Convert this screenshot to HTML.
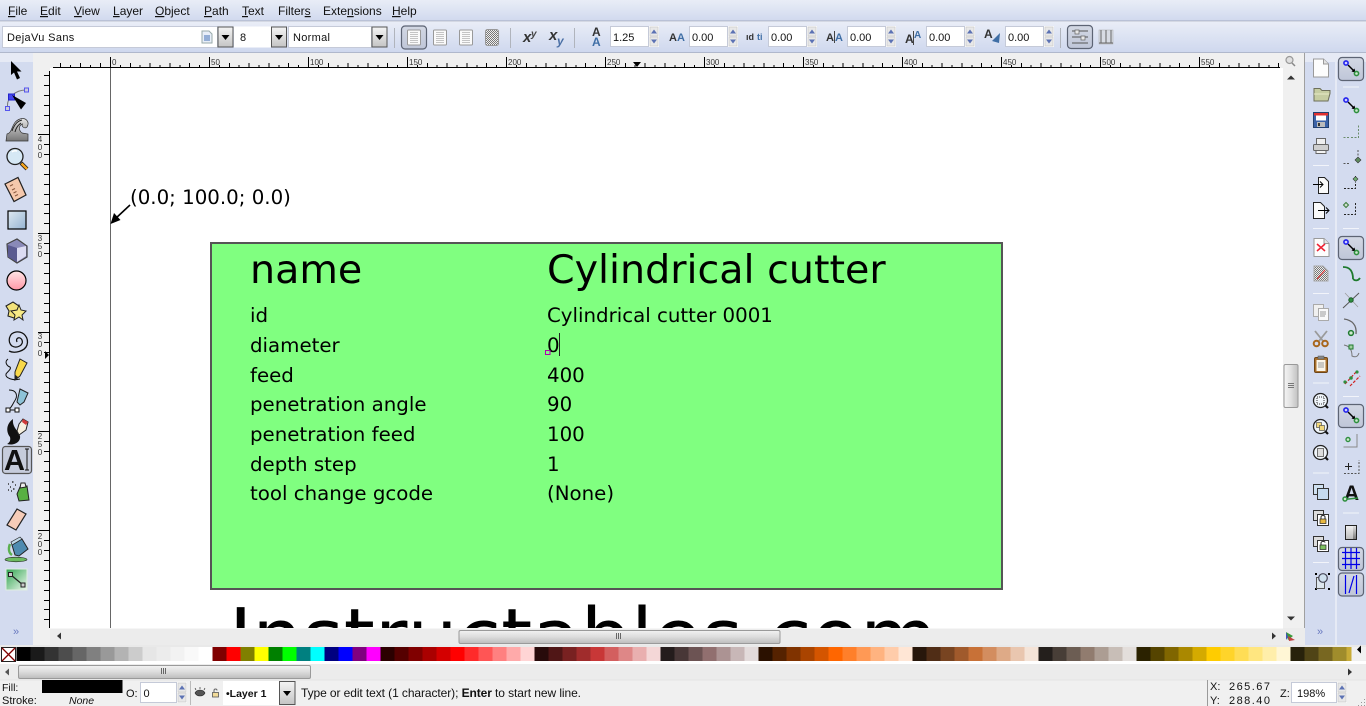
<!DOCTYPE html>
<html><head><meta charset="utf-8"><title>Inkscape</title>
<style>
html,body{margin:0;padding:0;width:1366px;height:706px;overflow:hidden;background:#f0f0f0}
svg{display:block;position:absolute;left:0;top:0}
text{font-family:"Liberation Sans",sans-serif;font-size:12px;fill:#111}
.c text,text.c{font-family:"DejaVu Sans","Liberation Sans",sans-serif;fill:#000}
.r text{font-size:8px;fill:#333}
.u{text-decoration:underline}
</style></head><body>
<svg width="1366" height="706" viewBox="0 0 1366 706" xmlns="http://www.w3.org/2000/svg">
<defs>
<linearGradient id="mb" x1="0" y1="0" x2="0" y2="1"><stop offset="0" stop-color="#e9edf7"/><stop offset="1" stop-color="#d0d9ee"/></linearGradient>
<linearGradient id="tb" x1="0" y1="0" x2="0" y2="1"><stop offset="0" stop-color="#e9edf7"/><stop offset="1" stop-color="#cfd8ee"/></linearGradient>
<linearGradient id="btn" x1="0" y1="0" x2="0" y2="1"><stop offset="0" stop-color="#f4f4f4"/><stop offset="1" stop-color="#c4c4c4"/></linearGradient>
<linearGradient id="th" x1="0" y1="0" x2="0" y2="1"><stop offset="0" stop-color="#f2f2f2"/><stop offset=".5" stop-color="#dcdcdc"/><stop offset="1" stop-color="#bcbcbc"/></linearGradient>
<linearGradient id="thv" x1="0" y1="0" x2="1" y2="0"><stop offset="0" stop-color="#f4f4f4"/><stop offset=".5" stop-color="#e0e0e0"/><stop offset="1" stop-color="#c0c0c0"/></linearGradient>
<linearGradient id="gr" x1="0" y1="0" x2="0" y2="1"><stop offset="0" stop-color="#e4e4e4"/><stop offset="1" stop-color="#777"/></linearGradient>
<linearGradient id="rb" x1="0" y1="0" x2="1" y2="1"><stop offset="0" stop-color="#dfe9f2"/><stop offset="1" stop-color="#95b4d2"/></linearGradient>
<linearGradient id="pk" x1="0" y1="0" x2="0" y2="1"><stop offset="0" stop-color="#ffe6e6"/><stop offset="1" stop-color="#ff97a6"/></linearGradient>
<linearGradient id="gg" x1="0" y1="0" x2="1" y2="1"><stop offset="0" stop-color="#2fa34f"/><stop offset="1" stop-color="#eef8ee"/></linearGradient>
<linearGradient id="act" x1="0" y1="0" x2="0" y2="1"><stop offset="0" stop-color="#d3d8e4"/><stop offset="1" stop-color="#bfc6d8"/></linearGradient>
<pattern id="ck" width="2" height="2" patternUnits="userSpaceOnUse"><rect width="2" height="2" fill="#eee"/><rect width="1" height="1" fill="#777"/><rect x="1" y="1" width="1" height="1" fill="#777"/></pattern>
<g id="sp"><rect x="0" y="0" width="10" height="21" fill="#fbfbfb"/><rect x="1" y="1" width="8" height="9" fill="#e8e8e8" stroke="#c4c4c4" stroke-width=".6"/><rect x="1" y="11" width="8" height="9" fill="#e8e8e8" stroke="#c4c4c4" stroke-width=".6"/><path d="M5 3.5 8 7.5H2zM5 17.5 2 13.5H8z" fill="#5c72b4"/></g>
<g id="ar"><rect x=".5" y=".5" width="15" height="20" fill="url(#btn)" stroke="#555"/><path d="M4 8.5h8l-4 5z" fill="#000"/></g>
<g id="tk" shape-rendering="crispEdges" stroke="#000" fill="none"><path d="M0 4v10M9.9 12v2M19.8 10v4M29.7 12v2M39.6 10v4M49.5 12v2M59.4 10v4M69.3 12v2M79.2 10v4M89.1 12v2"/></g>
<g id="sn"><path d="M-3 -3 3.5 3.5" stroke="#000" stroke-width="1.4"/><path d="M4.5 4.5 .5 3.5 3.5 .5z" fill="#000"/><circle cx="-5" cy="-5" r="2.1" fill="#cfd0ff" stroke="#2222ee" stroke-width="1.6"/><circle cx="5.5" cy="5.5" r="2.1" fill="#cfe8cf" stroke="#2f8f3f" stroke-width="1.6"/></g>
<g id="doc"><path d="M-7 -9H3L8 -4V9H-7Z" fill="#fdfdfd" stroke="#9a9a9a"/><path d="M3 -9V-4H8" fill="#e4e4e4" stroke="#9a9a9a"/></g>
<g id="act1"><rect x="-12.5" y="-11.5" width="25" height="23" rx="3.5" fill="url(#act)" stroke="#5d6474" stroke-width="1.2"/></g>
<g id="tdoc"><rect x="-6.5" y="-7.5" width="13" height="15" rx="1" fill="#fafafa" stroke="#999"/><path d="M-4 -5h8M-4 -3h8M-4 -1h8M-4 1h8M-4 3h8M-4 5h8" stroke="#c4c4c4"/></g>
<clipPath id="cv"><rect x="50" y="68" width="1233" height="560"/></clipPath>
</defs>

<!-- base -->
<rect width="1366" height="706" fill="#f0f0f0"/>
<rect width="1366" height="21" fill="url(#mb)"/>
<rect y="20" width="1366" height="1.5" fill="#b9c1d6"/>
<rect y="22" width="1366" height="30" fill="url(#tb)"/>
<rect y="52" width="1366" height="1" fill="#b0b8cc"/>

<!-- menu -->
<text x="8" y="15"><tspan class="u">F</tspan>ile</text>
<text x="40" y="15"><tspan class="u">E</tspan>dit</text>
<text x="74" y="15"><tspan class="u">V</tspan>iew</text>
<text x="113" y="15"><tspan class="u">L</tspan>ayer</text>
<text x="155" y="15"><tspan class="u">O</tspan>bject</text>
<text x="204" y="15"><tspan class="u">P</tspan>ath</text>
<text x="242" y="15"><tspan class="u">T</tspan>ext</text>
<text x="278" y="15">Filter<tspan class="u">s</tspan></text>
<text x="323" y="15">Exte<tspan class="u">n</tspan>sions</text>
<text x="392" y="15"><tspan class="u">H</tspan>elp</text>

<!-- text toolbar -->
<rect x="2.5" y="26.5" width="215" height="21" fill="#fff" stroke="#c5cad8"/>
<text x="7" y="41" style="font-size:11px;letter-spacing:.35px">DejaVu Sans</text>
<path d="M202 31h7l3 3v9h-10z" fill="#e8eef8" stroke="#9aa"/><path d="M204 36h6M204 38h6M204 40h6" stroke="#3f6fb5" stroke-width="1"/>
<use href="#ar" x="217.5" y="26.5"/>
<rect x="234" y="26.5" width="37" height="21" fill="#fff"/><text x="240" y="41" style="font-size:11px">8</text>
<use href="#ar" x="271" y="26.5"/>
<rect x="288.5" y="26.5" width="83" height="21" fill="#fff" stroke="#c5cad8"/><text x="293" y="41" style="font-size:11px;letter-spacing:.3px">Normal</text>
<use href="#ar" x="371.5" y="26.5"/>
<path d="M394.5 28v20" stroke="#b0b4bc"/>

<use href="#act1" x="414" y="37.5"/>
<use href="#tdoc" x="414" y="37.5"/><use href="#tdoc" x="440" y="37.5"/><use href="#tdoc" x="466" y="37.5"/>
<rect x="485.5" y="29.5" width="13" height="16" rx="2" fill="url(#ck)" stroke="#999"/>
<path d="M510.5 28v20M574.5 28v20" stroke="#b0b4bc"/>
<text x="523" y="42" style="font-size:15px;font-weight:bold;font-style:italic;fill:#333">x</text><text x="531" y="37" style="font-size:10px;font-weight:bold;font-style:italic;fill:#444">y</text>
<text x="549" y="40" style="font-size:15px;font-weight:bold;font-style:italic;fill:#333">x</text><text x="557" y="45" style="font-size:12px;font-weight:bold;font-style:italic;fill:#4a6fa5">y</text>

<text x="592" y="36" style="font-size:12px;font-weight:bold;fill:#333">A</text><text x="592" y="46" style="font-size:12px;font-weight:bold;fill:#3f6ea5">A</text>
<rect x="610.5" y="26.5" width="38" height="20" fill="#fff" stroke="#c5cad8"/><text x="613" y="41" style="font-size:11px">1.25</text><use href="#sp" x="649" y="26"/>
<text x="669" y="41" style="font-size:11px;font-weight:bold;fill:#333">A</text><text x="677" y="41" style="font-size:11px;font-weight:bold;fill:#3f6ea5">A</text>
<rect x="689.5" y="26.5" width="38" height="20" fill="#fff" stroke="#c5cad8"/><text x="692" y="41" style="font-size:11px">0.00</text><use href="#sp" x="728" y="26"/>
<text x="746" y="40" style="font-size:9px;font-weight:bold;fill:#333">ıd</text><text x="757" y="40" style="font-size:9px;font-weight:bold;fill:#3f6ea5">ti</text>
<rect x="768.5" y="26.5" width="38" height="20" fill="#fff" stroke="#c5cad8"/><text x="771" y="41" style="font-size:11px">0.00</text><use href="#sp" x="807" y="26"/>
<text x="826" y="41" style="font-size:11px;font-weight:bold;fill:#333">A</text><text x="835" y="41" style="font-size:11px;font-weight:bold;fill:#3f6ea5">A</text><path d="M834.5 31v12" stroke="#444"/>
<rect x="847.5" y="26.5" width="38" height="20" fill="#fff" stroke="#c5cad8"/><text x="850" y="41" style="font-size:11px">0.00</text><use href="#sp" x="886" y="26"/>
<text x="905" y="43" style="font-size:12px;font-weight:bold;fill:#333">A</text><text x="914" y="38" style="font-size:10px;font-weight:bold;fill:#3f6ea5">A</text><path d="M913.5 31v14" stroke="#444"/>
<rect x="926.5" y="26.5" width="38" height="20" fill="#fff" stroke="#c5cad8"/><text x="929" y="41" style="font-size:11px">0.00</text><use href="#sp" x="965" y="26"/>
<text x="984" y="38" style="font-size:12px;font-weight:bold;fill:#333">A</text><path d="M1000 33 992 41 999 43z" fill="#3f6ea5"/>
<rect x="1005.5" y="26.5" width="38" height="20" fill="#fff" stroke="#c5cad8"/><text x="1008" y="41" style="font-size:11px">0.00</text><use href="#sp" x="1044" y="26"/>
<path d="M1060.5 28v20" stroke="#b0b4bc"/>
<use href="#act1" x="1080" y="37"/>
<path d="M1072 31h16M1072 37h16M1072 43h16" stroke="#555" fill="none"/><path d="M1075 30h4v4h-4zM1081 36h4v4h-4z" fill="#e8e8e8" stroke="#666" stroke-width=".7"/>
<rect x="1099" y="30" width="14" height="14" fill="#d8dce4" stroke="#aaa" stroke-width=".5"/><path d="M1101 30v13M1106 30v13M1111 30v13M1099 43h14" stroke="#666" fill="none"/>

<!-- left toolbar -->
<rect x="0" y="53" width="33" height="592" fill="#d3dbef"/>
<rect x="0" y="53" width="33" height="9" fill="#e6eaf5"/>

<!-- rulers -->
<rect x="33" y="53" width="1250" height="15" fill="#f0f0f0"/>
<rect x="33" y="68" width="17" height="577" fill="#f0f0f0"/>
<path d="M53 67.5H1280" stroke="#000" shape-rendering="crispEdges"/>
<path d="M49.5 71V628" stroke="#000" shape-rendering="crispEdges"/>
<g transform="translate(0 53)">
<use href="#tk" x="110.5"/><use href="#tk" x="209.5"/><use href="#tk" x="308.5"/><use href="#tk" x="407.5"/><use href="#tk" x="506.5"/><use href="#tk" x="605.5"/><use href="#tk" x="704.5"/><use href="#tk" x="803.5"/><use href="#tk" x="902.5"/><use href="#tk" x="1001.5"/><use href="#tk" x="1100.5"/><use href="#tk" x="1199.5"/>
<path d="M60.5 10v4M70.5 12v2M80.5 10v4M90.5 12v2M100.5 10v4" stroke="#000" shape-rendering="crispEdges"/>
</g>
<g class="r">
<text x="112" y="65">0</text><text x="211" y="65">50</text><text x="310" y="65">100</text><text x="409" y="65">150</text><text x="508" y="65">200</text><text x="607" y="65">250</text><text x="706" y="65">300</text><text x="805" y="65">350</text><text x="904" y="65">400</text><text x="1003" y="65">450</text><text x="1102" y="65">500</text><text x="1201" y="65">550</text>
</g>
<path d="M633 62h8l-4 5z" fill="#000"/>
<path shape-rendering="crispEdges" stroke="#000" fill="none" d="M44 75.5h5M44 85.5h5M44 95.5h5M44 105.5h5M44 115.5h5M44 125.5h5M38 134.5h11M44 144.5h5M44 154.5h5M44 164.5h5M44 174.5h5M44 184.5h5M44 194.5h5M44 204.5h5M44 213.5h5M44 223.5h5M38 233.5h11M44 243.5h5M44 253.5h5M44 263.5h5M44 273.5h5M44 283.5h5M44 293.5h5M44 303.5h5M44 312.5h5M44 322.5h5M38 332.5h11M44 342.5h5M44 352.5h5M44 362.5h5M44 372.5h5M44 382.5h5M44 392.5h5M44 402.5h5M44 411.5h5M44 421.5h5M38 431.5h11M44 441.5h5M44 451.5h5M44 461.5h5M44 471.5h5M44 481.5h5M44 491.5h5M44 501.5h5M44 510.5h5M44 520.5h5M38 530.5h11M44 540.5h5M44 550.5h5M44 560.5h5M44 570.5h5M44 580.5h5M44 590.5h5M44 600.5h5M44 609.5h5M44 619.5h5"/>
<g class="r" text-anchor="middle">
<text x="40" y="142">4</text><text x="40" y="150">0</text><text x="40" y="158">0</text>
<text x="40" y="241">3</text><text x="40" y="249">5</text><text x="40" y="257">0</text>
<text x="40" y="339">3</text><text x="40" y="347">0</text><text x="40" y="356">0</text>
<text x="40" y="439">2</text><text x="40" y="447">5</text><text x="40" y="455">0</text>
<text x="40" y="539">2</text><text x="40" y="547">0</text><text x="40" y="555">0</text>
</g>
<path d="M45 351 49 355 45 359z" fill="#000"/>

<!-- canvas -->
<rect x="50" y="68" width="1233" height="560" fill="#fff"/>
<g clip-path="url(#cv)" class="c">
<path d="M110.5 68V628" stroke="#666" shape-rendering="crispEdges"/>
<rect x="211" y="243" width="791" height="346" fill="#80ff80" stroke="#555" stroke-width="2"/>
<text x="130" y="204" style="font-size:19.8px">(0.0; 100.0; 0.0)</text>
<path d="M130 205 115 219" stroke="#000" stroke-width="1.6"/><path d="M110.5 224 114 213 120.5 220z" fill="#000"/>
<text x="250" y="283" style="font-size:39.6px">name</text>
<text x="547" y="283" style="font-size:39.6px">Cylindrical cutter</text>
<text x="250" y="322" style="font-size:19.8px">id</text><text x="547" y="322" style="font-size:19.8px">Cylindrical cutter 0001</text>
<text x="250" y="352" style="font-size:19.8px">diameter</text><text x="547" y="352" style="font-size:19.8px">0</text>
<text x="250" y="382" style="font-size:19.8px">feed</text><text x="547" y="382" style="font-size:19.8px">400</text>
<text x="250" y="411" style="font-size:19.8px">penetration angle</text><text x="547" y="411" style="font-size:19.8px">90</text>
<text x="250" y="441" style="font-size:19.8px">penetration feed</text><text x="547" y="441" style="font-size:19.8px">100</text>
<text x="250" y="471" style="font-size:19.8px">depth step</text><text x="547" y="471" style="font-size:19.8px">1</text>
<text x="250" y="500" style="font-size:19.8px">tool change gcode</text><text x="547" y="500" style="font-size:19.8px">(None)</text>
<text x="229" y="665" style="font-size:79.2px">Instructables.com</text>
<path d="M559.5 333V356" stroke="#222" stroke-width="1" shape-rendering="crispEdges"/>
<rect x="545.5" y="350.5" width="4.5" height="4" fill="none" stroke="#b000b0" shape-rendering="crispEdges"/>
</g>

<!-- left tool icons -->
<path d="M11 61V75L14 72.5 17 79.5 20 78 17 71.5H21.5Z" fill="#000"/>
<path d="M7.5 106C7 98 15 90 26 90" fill="none" stroke="#777"/><rect x="5.5" y="106.5" width="4" height="4" fill="#ccd" stroke="#55e"/><rect x="24.5" y="88" width="4" height="4" fill="#ccd" stroke="#55e"/><rect x="8.5" y="94" width="6" height="6" fill="#4444ee" stroke="#22c"/><path d="M12 95 26 103 21 109.5Z" fill="#000"/>
<path d="M6 141 7 134C13 133 11 122 20 119 26 117 30 122 27 127 25 129 21 127 22.5 124 19 125 18 130 22 133L28 134V141Z" fill="url(#gr)" stroke="#333" stroke-width=".7"/><path d="M12 131C14 125 17 121 22 120M15 132C16 128 18 125 21 123" fill="none" stroke="#222"/>
<circle cx="15" cy="156.5" r="8" fill="#d6e8f5" stroke="#222" stroke-width="1.3"/><path d="M12 152c1-1 3-1.5 5-1" stroke="#fff" stroke-width="1.5" fill="none"/><path d="M21 163 27 169" stroke="#111" stroke-width="4"/><path d="M21.5 163.5 27 169" stroke="#f3a21c" stroke-width="2.5"/>
<path d="M5 184 18 177.5 26 195 14 201.5Z" fill="#f5c8ac" stroke="#222" stroke-width="1.2"/><path d="M10 186l3-1.5M12 190l3-1.5M13.5 193l3-1.5M15 196l3-1.5" stroke="#8a5a40"/>
<rect x="8" y="211" width="18" height="18" fill="url(#rb)" stroke="#000" stroke-width="1.2"/>
<path d="M7 244 17 239 27 246V257L17 263 8 257Z" fill="#8a8ab8" stroke="#444" stroke-width="1.2"/><path d="M17 248 26 246V256L17 262Z" fill="#dcdcf2"/><path d="M8 245 17 248V262L8 257Z" fill="#5a5a90"/>
<circle cx="16.5" cy="280.5" r="9.5" fill="url(#pk)" stroke="#000" stroke-width="1.2"/>
<path d="M6 306 13 302 19 306 17 314 14 318 8 316 9 311Z" fill="#f2e27a" stroke="#222" stroke-width="1.1"/>
<path d="M19 305 21 310 26 311 22 315 23 320 19 317 14 320 15 315 11 311 17 310Z" fill="#f7ea86" stroke="#222" stroke-width="1"/>
<path d="M17 342C15 338 20 336 22 340 24 345 17 349 12 346 7 342 9 333 16 332 24 331 29 338 27 345 25 351 15 354 9 351" fill="none" stroke="#111" stroke-width="1.3"/>
<path d="M8 359C4 362 7 366 10 367 12 369 7 372 6 374 5 378 13 381 20 379" fill="none" stroke="#111" stroke-width="1"/><path d="M20 359 27 363 20 376 15 380 15 372Z" fill="#f8d84a" stroke="#222"/><path d="M15 380 15.5 375 18 377Z" fill="#222"/>
<path d="M9 390C16 390 19 395 14 402 12 406 10 409 8 410" fill="none" stroke="#111"/><rect x="6" y="408" width="4" height="4" fill="#fff" stroke="#111"/><path d="M10 410H17" stroke="#111"/><rect x="15" y="408" width="4" height="4" fill="#fff" stroke="#111"/><path d="M20 389 28 393 24 402 20 405 17 402Z" fill="#8ec3d8" stroke="#222"/>
<path d="M13 419C6 424 6 432 10 437 11 441 9 443 7 444 14 446 21 442 20 436 19 431 12 428 13 419Z" fill="#111"/><path d="M19 424 23 419 28 422 26 430 19 435 17 431Z" fill="#f6f0e0" stroke="#222"/><path d="M23 419 28 422 26 425 22 422Z" fill="#d03a3a"/>
<rect x="2.5" y="446.5" width="29" height="27" rx="3" fill="#c6ccdc" stroke="#555" stroke-width="1.2"/>
<text x="4" y="470" style="font-family:'Liberation Sans',sans-serif;font-size:29px;font-weight:bold;fill:#111">A</text><path d="M25 449h4M27 449v21M25 470h4" stroke="#111" fill="none"/>
<path d="M20 487 27 486 29 500 19 501 17 494Z" fill="#58b043" stroke="#222"/><path d="M20 488 21 483 25 483 26 487Z" fill="#eee" stroke="#222"/><path d="M8 484h1M12 482h1.5M15 485h1M10 487h1M13 489h1.5M8 490h1M11 491h1" stroke="#333" stroke-width="1.5"/>
<path d="M17 509 26 514 16 530 7 525Z" fill="#f6ccb8" stroke="#222" stroke-width="1.2"/>
<path d="M12 545 22 539 28 549 19 556 15 555Z" fill="#4f8bb0" stroke="#222"/><path d="M12 545 22 539 20 537 11 542Z" fill="#c0d8e8" stroke="#222" stroke-width=".7"/><path d="M10 544C8 549 9 553 12 555" stroke="#5bb04f" stroke-width="2.5" fill="none"/><ellipse cx="16" cy="559.5" rx="11" ry="2.3" fill="#6dbb60" stroke="#222" stroke-width=".6"/>
<rect x="6" y="569" width="21" height="21" fill="url(#gg)" stroke="#dfeee0"/><path d="M11 575 23 585" stroke="#222" stroke-width="1.2"/><rect x="8.5" y="572.5" width="4" height="4" fill="#ccc" stroke="#222"/><rect x="21" y="583" width="4" height="4" fill="#ccc" stroke="#222"/>
<text x="13" y="635" style="font-size:11px;fill:#6a7ac0">»</text>

<!-- right: scroll + toolbars -->
<rect x="1283" y="68" width="16" height="561" fill="#f0f0f0"/>
<rect x="1283" y="53" width="22" height="15" fill="#f0f0f0"/>
<circle cx="1289.5" cy="60" r="3.5" fill="#e0e0e0" stroke="#999" stroke-width="1.2"/><path d="M1292 63 1295 66" stroke="#888" stroke-width="1.5"/>
<path d="M1287 79.5h8l-4-4z" fill="#333"/>
<path d="M1287 616.5h8l-4 4z" fill="#333"/>
<rect x="1284" y="364.5" width="14" height="43" rx="1.5" fill="url(#thv)" stroke="#999"/>
<path d="M1288 383.5h6M1288 385.5h6M1288 387.5h6" stroke="#777"/>
<rect x="1299" y="53" width="5" height="592" fill="#f0f0f0"/>
<rect x="1304" y="53" width="1" height="592" fill="#a0a0a0"/>
<rect x="1305" y="53" width="30" height="592" fill="#d3dbef"/>
<rect x="1335" y="53" width="2" height="592" fill="#e6eaf5"/>
<rect x="1337" y="53" width="29" height="592" fill="#d3dbef"/>
<rect x="1305" y="53" width="30" height="9" fill="#e6eaf5"/>
<rect x="1337" y="53" width="29" height="9" fill="#e6eaf5"/>

<!-- commands -->
<use href="#doc" x="1320.5" y="68"/>
<path d="M1314 88.5h6l2 2h8v3l-2 7.5h-14z" fill="#c6cda2" stroke="#6d6f5a"/><path d="M1314 94h15" stroke="#e8ecc8"/>
<rect x="1313.5" y="112.5" width="15" height="15" fill="#3b62a8" stroke="#23406f"/><rect x="1314" y="113" width="14" height="2.5" fill="#e03030"/><rect x="1316" y="115.5" width="10" height="5" fill="#fff"/><rect x="1317" y="122" width="8" height="5" fill="#bbb"/><rect x="1318" y="123" width="2" height="3" fill="#333"/>
<rect x="1316.5" y="138.5" width="9" height="6" fill="#eee" stroke="#666"/><rect x="1313.5" y="144.5" width="15" height="6" rx="1" fill="#cfcfcf" stroke="#666"/><rect x="1316" y="150.5" width="10" height="3" fill="#f4f4f4" stroke="#666"/>
<path d="M1313 165.5h16" stroke="#f2f4fa"/>
<path d="M1318.5 177.5h6l4 4v12h-10z" fill="#fafafa" stroke="#222"/><path d="M1313 184.5h10M1320 181.5l3 3-3 3" stroke="#000" fill="none"/>
<path d="M1313.5 202.5h7l4 4v12h-11z" fill="#fafafa" stroke="#222"/><path d="M1318 210.5h11M1326 207.5l3 3-3 3" stroke="#000" fill="none"/>
<path d="M1313 228.5h16" stroke="#f2f4fa"/>
<use href="#doc" x="1321" y="247.5"/><path d="M1317 244 1325 251M1325 244 1317 251" stroke="#e23" stroke-width="1.5"/>
<path d="M1314 266h9l5 5v10h-14z" fill="url(#ck)" stroke="#aaa"/><path d="M1317 279 1325 270" stroke="#d33" stroke-width="1"/>
<path d="M1313 293.5h16" stroke="#f2f4fa"/>
<rect x="1313.5" y="304.5" width="10" height="12" fill="#f0f0f0" stroke="#aaa"/><rect x="1318.5" y="308.5" width="10" height="12" fill="#fafafa" stroke="#aaa"/><path d="M1320 312h6M1320 314h6M1320 316h5" stroke="#999"/>
<path d="M1315 331 1323 341M1327 331 1319 341" stroke="#9a9a9a" stroke-width="1.8"/><circle cx="1316.5" cy="343.5" r="2.8" fill="none" stroke="#a8661c" stroke-width="2"/><circle cx="1325" cy="343.5" r="2.8" fill="none" stroke="#a8661c" stroke-width="2"/>
<rect x="1314.5" y="357.5" width="13" height="15" rx="1.5" fill="#a8702c" stroke="#6e4516"/><rect x="1316.5" y="360" width="9" height="11" fill="#fbf6ea"/><path d="M1318 363h6M1318 365h6M1318 367h6" stroke="#999"/><rect x="1318" y="356" width="6" height="3" fill="#888" stroke="#555" stroke-width=".5"/>
<path d="M1313 383h16" stroke="#f2f4fa"/>
<circle cx="1320.5" cy="400.5" r="7" fill="#f0f5fa" stroke="#222" stroke-width="1.3"/><path d="M1325.5 405.5 1328 408" stroke="#111" stroke-width="2.2"/><rect x="1317" y="397" width="7" height="7" fill="none" stroke="#333" stroke-dasharray="1 1"/>
<circle cx="1320.5" cy="426.5" r="7" fill="#f0f5fa" stroke="#222" stroke-width="1.3"/><path d="M1325.5 431.5 1328 434" stroke="#111" stroke-width="2.2"/><rect x="1316.5" y="422.5" width="5" height="5" fill="#f2d87a" stroke="#555" stroke-width=".7"/><rect x="1319.5" y="425.5" width="5" height="5" fill="#f2d87a" stroke="#555" stroke-width=".7"/>
<circle cx="1320.5" cy="452.5" r="7" fill="#f0f5fa" stroke="#222" stroke-width="1.3"/><path d="M1325.5 457.5 1328 460" stroke="#111" stroke-width="2.2"/><rect x="1317.5" y="448.5" width="6" height="8" fill="#ddd" stroke="#555" stroke-width=".8"/>
<path d="M1313 473h16" stroke="#f2f4fa"/>
<rect x="1313.5" y="484.5" width="10" height="10" fill="#cfe0f0" stroke="#333"/><rect x="1317.5" y="488.5" width="11" height="11" fill="#c6dbf0" stroke="#333"/>
<rect x="1313.5" y="510.5" width="10" height="10" fill="#ddd" stroke="#333"/><rect x="1317.5" y="514.5" width="11" height="11" fill="#fff" stroke="#333"/><rect x="1320" y="519" width="6" height="4.5" fill="#e8b840" stroke="#222" stroke-width=".7"/><path d="M1321 519v-2c0-2 4-2 4 0v2" fill="none" stroke="#222"/>
<rect x="1313.5" y="536.5" width="10" height="10" fill="#ddd" stroke="#333"/><rect x="1317.5" y="540.5" width="11" height="11" fill="#fff" stroke="#333"/><rect x="1320" y="545" width="6" height="4.5" fill="#7ec060" stroke="#222" stroke-width=".7"/><path d="M1321 545v-2c0-2 4-2 4-.5" fill="none" stroke="#222"/>
<path d="M1313 562.5h16" stroke="#f2f4fa"/>
<path d="M1315 574h2M1328 574h2M1315 589h2M1328 589h2" stroke="#000" stroke-width="2"/><rect x="1316.5" y="577.5" width="8" height="11" fill="#dde6ee" stroke="#555"/><circle cx="1323" cy="578" r="4.3" fill="#cfe0ee" stroke="#445" stroke-width="1.2"/>
<text x="1317" y="635" style="font-size:11px;fill:#6a7ac0">»</text>

<!-- snap bar -->
<use href="#act1" x="1351" y="69"/><use href="#sn" x="1351" y="68"/>
<path d="M1343 87h16" stroke="#f2f4fa"/>
<use href="#sn" x="1351" y="105"/>
<path d="M1343.5 137.5h6M1351 137.5h7.5V124" fill="none" stroke="#6b8c6b" stroke-dasharray="2 1.5"/>
<path d="M1343.5 163.5h7M1358 150v7" fill="none" stroke="#555" stroke-dasharray="2 1.5"/><path d="M1355 160 1358 157 1361 160 1358 163Z" fill="#5e8a5e" stroke="#333" stroke-width=".6"/>
<path d="M1344 188.5h11.5V182M1355.5 178v-2" fill="none" stroke="#222" stroke-dasharray="2 1.5"/><path d="M1353 179 1355.5 176.5 1358 179 1355.5 181.5Z" fill="#6fae6f" stroke="#333" stroke-width=".6"/>
<path d="M1344 214.5h11.5V202" fill="none" stroke="#222" stroke-dasharray="2 1.5"/><path d="M1343.5 205 1346 202.5 1348.5 205 1346 207.5Z" fill="#cfe0cf" stroke="#3a7a3a"/>
<path d="M1343 228.5h16" stroke="#f2f4fa"/>
<use href="#act1" x="1351" y="248"/><use href="#sn" x="1351" y="247"/>
<path d="M1343 267C1350 267 1353 271 1353 279M1360 278C1358 281 1355 281 1353 279" fill="none" stroke="#1e7a2e" stroke-width="1.8"/>
<path d="M1343 308 1359 293" stroke="#555"/><path d="M1345 293 1358 307" stroke="#999" stroke-width=".7"/><circle cx="1351" cy="300" r="2.2" fill="#2f8f3f" stroke="#1d5a28"/>
<path d="M1344 319C1352 320 1357 325 1356 334" fill="none" stroke="#666" stroke-width="1.3"/><circle cx="1351" cy="333" r="2.4" fill="#cfe8cf" stroke="#1f7a2f" stroke-width="1.5"/>
<path d="M1344 345C1350 346 1352 350 1352 356 1356 358 1358 356 1359 353" fill="none" stroke="#777"/><rect x="1349" y="345" width="4" height="4" fill="#9fd09f" stroke="#1f7a2f"/>
<path d="M1345 384 1357 371M1350 386 1360 376" stroke="#d02020" stroke-width="1.2" stroke-dasharray="3 1.5"/><circle cx="1351" cy="378" r="1.8" fill="#2f8f3f"/><circle cx="1345" cy="382" r="1.6" fill="#2f8f3f"/><circle cx="1357" cy="372" r="1.6" fill="#2f8f3f"/>
<path d="M1343 396.5h16" stroke="#f2f4fa"/>
<use href="#act1" x="1351" y="416"/><use href="#sn" x="1351" y="415"/>
<circle cx="1348" cy="439.5" r="2" fill="#cfe8cf" stroke="#2f8f3f" stroke-width="1.4"/><path d="M1343.5 447h13.5V434" fill="none" stroke="#888"/>
<path d="M1344 473.5h15V460" fill="none" stroke="#555" stroke-dasharray="2 1.5"/><path d="M1345 466.5h7M1348.5 463v7" stroke="#222"/>
<text x="1344" y="500" style="font-size:21px;font-weight:bold;fill:#111">A</text><path d="M1344 499.5 1358 498" stroke="#2f8f3f" stroke-width="1.6"/><circle cx="1345" cy="499" r="2" fill="#cfe8cf" stroke="#2f8f3f" stroke-width="1.5"/>
<path d="M1343 513h16" stroke="#f2f4fa"/>
<rect x="1345.5" y="525.5" width="11" height="14" fill="url(#gr)" stroke="#222"/><rect x="1346" y="526" width="7" height="13" fill="#fff" opacity=".5"/>
<use href="#act1" x="1351" y="559"/>
<path d="M1342 552.5h18M1342 558.5h18M1342 564.5h18M1345.5 548v21M1351 548v21M1356.5 548v21" stroke="#0000e8" stroke-width="1.2" fill="none"/>
<use href="#act1" x="1351" y="584.5"/>
<path d="M1345.5 575v19M1356.5 575v19" stroke="#0000e8" stroke-width="1.2"/><path d="M1349 593 1354 576" stroke="#0000e8" stroke-width="1.2"/>

<!-- horizontal scroll -->
<rect x="33" y="628" width="1272" height="17" fill="#ececec"/>
<path d="M33 628.5H1283" stroke="#f6f6f6"/>
<rect x="33" y="628" width="17" height="17" fill="#f0f0f0"/>
<path d="M61 632.5v7l-4-3.500z" fill="#333"/>
<rect x="459" y="630.5" width="321" height="13" rx="1.5" fill="url(#th)" stroke="#9a9a9a"/>
<path d="M616.5 633v6M618.5 633v6M620.5 633v6" stroke="#666"/>
<path d="M1272 632.5v7l4-3.5z" fill="#333"/>
<path d="M1286 632 1293 636 1288 640Z" fill="#3a9a3a"/><path d="M1288 636 1295 640 1289 641Z" fill="#c04040"/><path d="M1286 632 1288 637 1286 640Z" fill="#4050c0"/>

<!-- palette -->
<rect y="645" width="1366" height="2" fill="#e9e9e9"/>
<rect y="661" width="1366" height="3" fill="#fff"/>
<rect x="0" y="647" width="1366" height="14" fill="#f0f0f0"/>
<g shape-rendering="crispEdges" transform="translate(16.5 647)">
<rect x="0" width="14" height="14" fill="#000000"/><rect x="14" width="14" height="14" fill="#1a1a1a"/><rect x="28" width="14" height="14" fill="#333333"/><rect x="42" width="14" height="14" fill="#4d4d4d"/><rect x="56" width="14" height="14" fill="#666666"/><rect x="70" width="14" height="14" fill="#808080"/><rect x="84" width="14" height="14" fill="#999999"/><rect x="98" width="14" height="14" fill="#b3b3b3"/><rect x="112" width="14" height="14" fill="#cccccc"/><rect x="126" width="14" height="14" fill="#e6e6e6"/><rect x="140" width="14" height="14" fill="#ececec"/><rect x="154" width="14" height="14" fill="#f2f2f2"/><rect x="168" width="14" height="14" fill="#f9f9f9"/><rect x="182" width="14" height="14" fill="#ffffff"/>
<rect x="196" width="14" height="14" fill="#800000"/><rect x="210" width="14" height="14" fill="#ff0000"/><rect x="224" width="14" height="14" fill="#808000"/><rect x="238" width="14" height="14" fill="#ffff00"/><rect x="252" width="14" height="14" fill="#008000"/><rect x="266" width="14" height="14" fill="#00ff00"/><rect x="280" width="14" height="14" fill="#008080"/><rect x="294" width="14" height="14" fill="#00ffff"/><rect x="308" width="14" height="14" fill="#000080"/><rect x="322" width="14" height="14" fill="#0000ff"/><rect x="336" width="14" height="14" fill="#800080"/><rect x="350" width="14" height="14" fill="#ff00ff"/>
<rect x="364" width="14" height="14" fill="#2b0000"/><rect x="378" width="14" height="14" fill="#550000"/><rect x="392" width="14" height="14" fill="#800000"/><rect x="406" width="14" height="14" fill="#aa0000"/><rect x="420" width="14" height="14" fill="#d40000"/><rect x="434" width="14" height="14" fill="#ff0000"/><rect x="448" width="14" height="14" fill="#ff2a2a"/><rect x="462" width="14" height="14" fill="#ff5555"/><rect x="476" width="14" height="14" fill="#ff8080"/><rect x="490" width="14" height="14" fill="#ffaaaa"/><rect x="504" width="14" height="14" fill="#ffd5d5"/>
<rect x="518" width="14" height="14" fill="#280b0b"/><rect x="532" width="14" height="14" fill="#501616"/><rect x="546" width="14" height="14" fill="#782121"/><rect x="560" width="14" height="14" fill="#a02c2c"/><rect x="574" width="14" height="14" fill="#c83737"/><rect x="588" width="14" height="14" fill="#d35f5f"/><rect x="602" width="14" height="14" fill="#de8787"/><rect x="616" width="14" height="14" fill="#e9afaf"/><rect x="630" width="14" height="14" fill="#f4d7d7"/>
<rect x="644" width="14" height="14" fill="#241c1c"/><rect x="658" width="14" height="14" fill="#483737"/><rect x="672" width="14" height="14" fill="#6c5353"/><rect x="686" width="14" height="14" fill="#916f6f"/><rect x="700" width="14" height="14" fill="#ac9393"/><rect x="714" width="14" height="14" fill="#c8b7b7"/><rect x="728" width="14" height="14" fill="#e3dbdb"/>
<rect x="742" width="14" height="14" fill="#2b1100"/><rect x="756" width="14" height="14" fill="#552200"/><rect x="770" width="14" height="14" fill="#803300"/><rect x="784" width="14" height="14" fill="#aa4400"/><rect x="798" width="14" height="14" fill="#d45500"/><rect x="812" width="14" height="14" fill="#ff6600"/><rect x="826" width="14" height="14" fill="#ff7f2a"/><rect x="840" width="14" height="14" fill="#ff9955"/><rect x="854" width="14" height="14" fill="#ffb380"/><rect x="868" width="14" height="14" fill="#ffccaa"/><rect x="882" width="14" height="14" fill="#ffe6d5"/>
<rect x="896" width="14" height="14" fill="#28170b"/><rect x="910" width="14" height="14" fill="#502d16"/><rect x="924" width="14" height="14" fill="#784421"/><rect x="938" width="14" height="14" fill="#a05a2c"/><rect x="952" width="14" height="14" fill="#c87137"/><rect x="966" width="14" height="14" fill="#d38d5f"/><rect x="980" width="14" height="14" fill="#deaa87"/><rect x="994" width="14" height="14" fill="#e9c6af"/><rect x="1008" width="14" height="14" fill="#f4e3d7"/>
<rect x="1022" width="14" height="14" fill="#241f1c"/><rect x="1036" width="14" height="14" fill="#483e37"/><rect x="1050" width="14" height="14" fill="#6c5d53"/><rect x="1064" width="14" height="14" fill="#917c6f"/><rect x="1078" width="14" height="14" fill="#ac9d93"/><rect x="1092" width="14" height="14" fill="#c8beb7"/><rect x="1106" width="14" height="14" fill="#e3dedb"/>
<rect x="1120" width="14" height="14" fill="#2b2200"/><rect x="1134" width="14" height="14" fill="#554400"/><rect x="1148" width="14" height="14" fill="#806600"/><rect x="1162" width="14" height="14" fill="#aa8800"/><rect x="1176" width="14" height="14" fill="#d4aa00"/><rect x="1190" width="14" height="14" fill="#ffcc00"/><rect x="1204" width="14" height="14" fill="#ffd42a"/><rect x="1218" width="14" height="14" fill="#ffdd55"/><rect x="1232" width="14" height="14" fill="#ffe680"/><rect x="1246" width="14" height="14" fill="#ffeeaa"/><rect x="1260" width="14" height="14" fill="#fff6d5"/>
<rect x="1274" width="14" height="14" fill="#28220b"/><rect x="1288" width="14" height="14" fill="#504416"/><rect x="1302" width="14" height="14" fill="#786721"/><rect x="1316" width="14" height="14" fill="#a08c2c"/><rect x="1330" width="5" height="14" fill="#c8ab37"/>
</g>
<rect x="1.5" y="647.5" width="14" height="14" fill="#fff" stroke="#222"/><path d="M2 648 15 661M15 648 2 661" stroke="#800000" stroke-width="1.3"/>
<path d="M1361 645.5v8l-4-4z" fill="#000"/>

<!-- palette scroll -->
<rect y="664" width="1366" height="16" fill="#ececec"/>
<rect x="18.5" y="665.5" width="292" height="13" rx="1.5" fill="url(#th)" stroke="#9a9a9a"/>
<path d="M161.5 668v6M163.5 668v6M165.5 668v6" stroke="#666"/>
<path d="M9 668.5v7l-4-3.5z" fill="#555"/>
<path d="M1348 668.5v7l4-3.5z" fill="#333"/>

<!-- status -->
<rect y="680" width="1366" height="26" fill="#f0f0f0"/>
<path d="M0 680H1366" stroke="#e4e4e4"/>
<text x="2" y="691" style="font-size:10.5px">Fill:</text>
<text x="2" y="704" style="font-size:11px">Stroke:</text>
<rect x="42" y="680" width="80.5" height="13" fill="#000"/>
<text x="69" y="704" style="font-size:10.5px;font-style:italic">None</text>
<text x="126" y="697" style="font-size:11px">O:</text>
<rect x="140.5" y="682.5" width="36" height="20" fill="#fff" stroke="#c5cad8"/><text x="143.5" y="697" style="font-size:11px">0</text><use href="#sp" x="177" y="682"/>
<path d="M190.5 681v24" stroke="#bbb"/>
<path d="M195 693C197 689 203 689 205 693 203 697 197 697 195 693Z" fill="#555" stroke="#222" stroke-width=".6"/><path d="M196 690 195 688M200 689V687M204 690 205 688" stroke="#333" stroke-width=".7"/>
<rect x="212.5" y="692.5" width="6" height="4.5" fill="#f3dc9a" stroke="#555" stroke-width=".8"/><path d="M214 692V690.5C214 688.5 217 688.5 217 690.5" fill="none" stroke="#666"/>
<rect x="223" y="681" width="56" height="24" fill="#fff"/>
<text x="226" y="697" style="font-size:10.5px;font-weight:bold">•Layer 1</text>
<rect x="279.5" y="681.5" width="15.5" height="23" fill="url(#btn)" stroke="#555"/><path d="M283 691h8l-4 5z" fill="#000"/>
<text x="301" y="697" textLength="280" lengthAdjust="spacing">Type or edit text (1 character); <tspan style="font-weight:bold">Enter</tspan> to start new line.</text>
<path d="M1207.5 680v26" stroke="#9a9a9a"/>
<text x="1210" y="690" style="font-size:11px">X:</text>
<text x="1210" y="704" style="font-size:11px">Y:</text>
<text x="1229" y="690" style="font-size:11px" textLength="41">265.67</text>
<text x="1229" y="704" style="font-size:11px" textLength="41">288.40</text>
<text x="1280" y="697" style="font-size:11px">Z:</text>
<rect x="1291.5" y="682.5" width="45" height="20" fill="#fff" stroke="#c5cad8"/><text x="1297" y="697" style="font-size:11px">198%</text><use href="#sp" x="1337" y="682"/>
<path d="M1364 699.5h1M1361 702.5h1M1364 702.5h1M1358 705.5h1M1361 705.5h1M1364 705.5h1" stroke="#999"/>
</svg>
</body></html>
